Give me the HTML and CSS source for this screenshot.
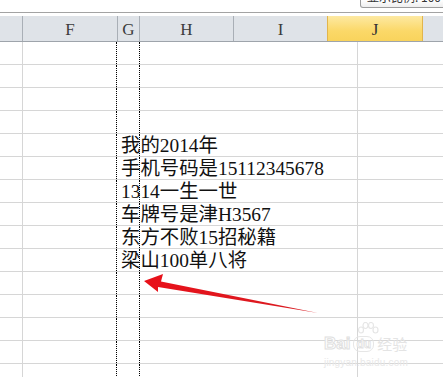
FILE: index.html
```html
<!DOCTYPE html>
<html>
<head>
<meta charset="utf-8">
<link rel="stylesheet" href="styles.css">
</head>
<body>
<div class="sheet">
  <div class="topbar"></div>
  <div class="tip"><span class="tip-text">显示比例: 100% (默认)</span></div>
  <div class="colhead">
    <div class="hc stub"></div>
    <div class="hc cf">F</div>
    <div class="hc cg">G</div>
    <div class="hc ch">H</div>
    <div class="hc ci">I</div>
    <div class="hc cj">J</div>
    <div class="hc rest"></div>
  </div>
  <div class="grid">
    <div class="row"><div class="c a"></div><div class="c b"></div><div class="c g"></div><div class="c d"></div><div class="c e"></div></div>
    <div class="row"><div class="c a"></div><div class="c b"></div><div class="c g"></div><div class="c d"></div><div class="c e"></div></div>
    <div class="row"><div class="c a"></div><div class="c b"></div><div class="c g"></div><div class="c d"></div><div class="c e"></div></div>
    <div class="row"><div class="c a"></div><div class="c b"></div><div class="c g"></div><div class="c d"></div><div class="c e"></div></div>
    <div class="row"><div class="c a"></div><div class="c b"></div><div class="c g txt">我的2014年</div><div class="c d"></div><div class="c e"></div></div>
    <div class="row"><div class="c a"></div><div class="c b"></div><div class="c g txt">手机号码是15112345678</div><div class="c d"></div><div class="c e"></div></div>
    <div class="row"><div class="c a"></div><div class="c b"></div><div class="c g txt">1314一生一世</div><div class="c d"></div><div class="c e"></div></div>
    <div class="row"><div class="c a"></div><div class="c b"></div><div class="c g txt">车牌号是津H3567</div><div class="c d"></div><div class="c e"></div></div>
    <div class="row"><div class="c a"></div><div class="c b"></div><div class="c g txt">东方不败15招秘籍</div><div class="c d"></div><div class="c e"></div></div>
    <div class="row"><div class="c a"></div><div class="c b"></div><div class="c g txt">梁山100单八将</div><div class="c d"></div><div class="c e"></div></div>
    <div class="row"><div class="c a"></div><div class="c b"></div><div class="c g"></div><div class="c d"></div><div class="c e"></div></div>
    <div class="row"><div class="c a"></div><div class="c b"></div><div class="c g"></div><div class="c d"></div><div class="c e"></div></div>
    <div class="row"><div class="c a"></div><div class="c b"></div><div class="c g"></div><div class="c d"></div><div class="c e"></div></div>
    <div class="row"><div class="c a"></div><div class="c b"></div><div class="c g"></div><div class="c d"></div><div class="c e"></div></div>
    <div class="row"><div class="c a"></div><div class="c b"></div><div class="c g"></div><div class="c d"></div><div class="c e"></div></div>
  </div>

  <svg class="arrow" width="443" height="377" viewBox="0 0 443 377">
    <defs>
      <linearGradient id="ag" x1="0" y1="0" x2="1" y2="0">
        <stop offset="0" stop-color="#e8111a"/>
        <stop offset="1" stop-color="#d81c22"/>
      </linearGradient>
    </defs>
    <polygon points="144,281 163,274 161,281.5 318,313 158,287 158,292" fill="url(#ag)"/>
  </svg>

  <div class="wm">
    <svg class="paw" width="24" height="16" viewBox="0 0 24 16">
      <g fill="none" stroke="#e6e6e6" stroke-width="1.2">
        <ellipse cx="5" cy="8" rx="2.5" ry="3"/>
        <ellipse cx="9.5" cy="3.5" rx="2.5" ry="3"/>
        <ellipse cx="15" cy="3.5" rx="2.5" ry="3"/>
        <ellipse cx="19.5" cy="8" rx="2.5" ry="3"/>
      </g>
    </svg>
    <div class="wm-main"><span class="wm-bai">Bai</span><span class="wm-du">du</span><span class="wm-jy">经验</span></div>
    <div class="wm-url">jingyan.baidu.com</div>
  </div>
</div>
</body>
</html>
```

FILE: styles.css
```css
html, body {
  margin: 0;
  padding: 0;
  background: #ffffff;
}
.sheet {
  position: relative;
  width: 443px;
  height: 377px;
  overflow: hidden;
  background: #ffffff;
}
.topbar {
  height: 12px;
  border-bottom: 1px solid #a3a3a3;
  margin-bottom: 3px;
}
.tip {
  position: absolute;
  left: 360px;
  top: 0;
  width: 95px;
  height: 7px;
  overflow: hidden;
  border: 1px solid #9c9c9c;
  border-top: none;
  border-radius: 0 0 0 3px;
  background: linear-gradient(#ffffff, #eeeeee);
}
.tip-text {
  display: block;
  margin-top: -10px;
  padding-left: 6px;
  font: 12px/14px "Noto Sans CJK SC", sans-serif;
  color: #333333;
  white-space: nowrap;
}
.colhead {
  display: flex;
  height: 25px;
  border-bottom: 1px solid #9ea4ab;
  background: #dfe3e8;
}
.hc {
  box-sizing: border-box;
  height: 25px;
  display: flex;
  align-items: center;
  justify-content: center;
  font: 17px/1 "Liberation Serif", serif;
  color: #3c3c3c;
  padding-top: 2px;
}
.stub { width: 23px; border-right: 1px solid #a9afb6; }
.cf { width: 95px; border-right: 1px solid #a9afb6; }
.cg { width: 22px; border-right: 1px solid #a9afb6; }
.ch { width: 94px; border-right: 1px solid #a9afb6; }
.ci { width: 93px; }
.cj {
  width: 96px;
  background: linear-gradient(#fde9a2, #fbd868 60%, #f9d35c);
  border-left: 1px solid #e2b54c;
  border-right: 1px solid #e2b54c;
  color: #333333;
}
.rest { flex: 1; }
.grid {
  display: flex;
  flex-direction: column;
}
.row {
  display: grid;
  grid-template-columns: 23px 94px 23px 218px 1fr;
  height: 22px;
  border-bottom: 1px solid #d6d6d6;
}
.c {
  box-sizing: border-box;
  height: 22px;
}
.a { border-right: 1px solid #d6d6d6; }
.b { border-right: 1px dotted #000000; }
.g { border-right: 1px dotted #000000; }
.d { border-right: 1px solid #d6d6d6; }
.txt {
  padding-left: 4px;
  white-space: nowrap;
  overflow: visible;
  font: 19.4px/22px "Liberation Serif", "Noto Sans CJK SC", serif;
  color: #111111;
  padding-top: 1px;
}
.arrow {
  position: absolute;
  left: 0;
  top: 0;
  pointer-events: none;
}
.wm {
  position: absolute;
  left: 324px;
  top: 322px;
  width: 92px;
  color: #e6e6e6;
}
.paw {
  display: block;
  margin-left: 32px;
}
.wm-main {
  display: flex;
  align-items: center;
  margin-top: -2px;
  white-space: nowrap;
}
.wm-bai {
  font: bold 17px/16px "Liberation Sans", sans-serif;
  color: #ffffff;
  -webkit-text-stroke: 1px #e0e0e0;
}
.wm-du {
  font: bold 12px/14px "Liberation Sans", sans-serif;
  color: #ffffff;
  -webkit-text-stroke: 0.8px #e0e0e0;
  border: 1px solid #e6e6e6;
  border-radius: 7px;
  padding: 0 2px;
  margin-left: 3px;
}
.wm-jy {
  font: 15px/16px "Noto Sans CJK SC", sans-serif;
  color: #e4e4e4;
  margin-left: 3px;
}
.wm-url {
  font: 10px/10px "Liberation Sans", sans-serif;
  color: #e8e8e8;
  margin-top: 6px;
  letter-spacing: 0.2px;
}
```
